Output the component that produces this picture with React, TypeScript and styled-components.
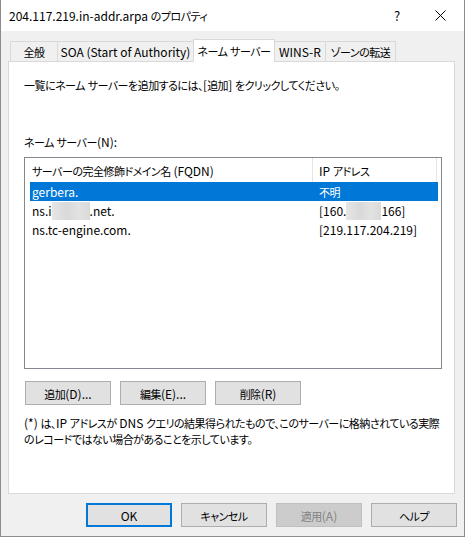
import { Fragment } from 'react';
import styled, { createGlobalStyle } from 'styled-components';

const GlobalStyle = createGlobalStyle`
  body {
    margin: 0;
    background: #ffffff;
    font-family: 'Noto Sans CJK JP', 'Noto Sans', sans-serif;
    font-feature-settings: 'palt';
    font-size: 12px;
    color: #000000;
  }
  * {
    box-sizing: border-box;
  }
`;

// Yu Gothic UI kana are much narrower than Noto's, so Japanese runs get a tighter span
const CJK = /([\u3000-\u30ff\u3400-\u9fff\uff01-\uff60]+)/;
const jp = (s: string) => (
  <span>
    {s.split(CJK).map((part, i) => (i % 2 ? <Ja key={i}>{part}</Ja> : <Fragment key={i}>{part}</Fragment>))}
  </span>
);

interface ServerRow {
  name: string[];
  ip: string[];
}

const rows: ServerRow[] = [
  { name: ['gerbera.'], ip: ['不明'] },
  { name: ['ns.i', '*', '.net.'], ip: ['[160.', '*', '166]'] },
  { name: ['ns.tc-engine.com.'], ip: ['[219.117.204.219]'] },
];

const tabs = [
  { label: '全般', w: 48 },
  { label: 'SOA (Start of Authority)', w: 137 },
  { label: 'ネーム サーバー', w: 82, active: true },
  { label: 'WINS-R', w: 52 },
  { label: 'ゾーンの転送', w: 71 },
];

const renderParts = (parts: string[], w: number) =>
  parts.map((p, i) => (p === '*' ? <Blur key={i} $w={w} /> : <Fragment key={i}>{jp(p)}</Fragment>));

const App = () => {
  return (
    <>
      <GlobalStyle />
      <Window>
        <TitleBar>
          <Title>{jp('204.117.219.in-addr.arpa のプロパティ')}</Title>
          <HelpGlyph>?</HelpGlyph>
          <CloseGlyph>
            <svg width="11" height="11" viewBox="0 0 11 11">
              <path d="M0.5 0.5 L10.5 10.5 M10.5 0.5 L0.5 10.5" stroke="#000" strokeWidth="1" />
            </svg>
          </CloseGlyph>
        </TitleBar>

        <Body>
          <TabStrip>
            {tabs.map(t => (
              <Tab key={t.label} $w={t.w} $active={!!t.active}>
                {jp(t.label)}
              </Tab>
            ))}
          </TabStrip>

          <Panel>
            <Intro>{jp('一覧にネーム サーバーを追加するには、[追加] をクリックしてください。')}</Intro>
            <Label>{jp('ネーム サーバー(N):')}</Label>

            <ListBox>
              <Header>
                <HeadCell $w={288}>{jp('サーバーの完全修飾ドメイン名 (FQDN)')}</HeadCell>
                <HeadCell $w={124} $pad={6}>{jp('IP アドレス')}</HeadCell>
              </Header>
              {rows.map((r, i) => (
                <Row key={i} $selected={i === 0}>
                  <Cell $w={283} $pad={2}>{renderParts(r.name, 38)}</Cell>
                  <Cell $w={124} $pad={6}>{renderParts(r.ip, 35)}</Cell>
                </Row>
              ))}
            </ListBox>

            <ButtonRow>
              <Button>{jp('追加(D)...')}</Button>
              <Button>{jp('編集(E)...')}</Button>
              <Button>{jp('削除(R)')}</Button>
            </ButtonRow>

            <Note>
              {jp('(*) は、IP アドレスが DNS クエリの結果得られたもので、このサーバーに格納されている実際')}
              <br />
              {jp('のレコードではない場合があることを示しています。')}
            </Note>
          </Panel>

          <Footer>
            <Button $default>OK</Button>
            <Button>{jp('キャンセル')}</Button>
            <Button $disabled>{jp('適用(A)')}</Button>
            <Button>{jp('ヘルプ')}</Button>
          </Footer>
        </Body>
      </Window>
    </>
  );
};

export default App;

const Ja = styled.span`
  font-size: 11px;
  letter-spacing: -0.5px;
`;

const Window = styled.div`
  width: 465px;
  height: 537px;
  display: flex;
  flex-direction: column;
  border: 1px solid #8c8c8c;
  border-top: none;
  background: #f0f0f0;
`;

const TitleBar = styled.div`
  height: 31px;
  flex-shrink: 0;
  display: flex;
  align-items: center;
  background: #ffffff;
  padding-left: 8px;
`;

const Title = styled.div`
  flex: 1;
  white-space: nowrap;
  margin-top: -1px;
`;

const HelpGlyph = styled.div`
  width: 14px;
  font-size: 13px;
  text-align: center;
  margin-right: 31px;
  margin-top: -1px;
`;

const CloseGlyph = styled.div`
  display: flex;
  margin-right: 18px;
`;

const Body = styled.div`
  flex: 1;
  display: flex;
  flex-direction: column;
  padding: 8px 9px 0 7px;
`;

const TabStrip = styled.div`
  display: flex;
  align-items: flex-end;
  height: 22px;
  padding-left: 2px;
`;

const Tab = styled.div<{ $w: number; $active: boolean }>`
  width: ${p => p.$w}px;
  height: ${p => (p.$active ? 23 : 20)}px;
  margin-left: -1px;
  margin-bottom: ${p => (p.$active ? -1 : 0)}px;
  position: relative;
  z-index: ${p => (p.$active ? 2 : 1)};
  display: flex;
  align-items: center;
  justify-content: center;
  padding-bottom: ${p => (p.$active ? 2 : 0)}px;
  white-space: nowrap;
  background: ${p => (p.$active ? '#ffffff' : '#f0f0f0')};
  border: 1px solid #d9d9d9;
  border-bottom: none;
  &:first-child {
    margin-left: 0;
  }
`;

const Panel = styled.div`
  height: 433px;
  display: flex;
  flex-direction: column;
  background: #ffffff;
  border: 1px solid #d9d9d9;
  padding: 0 0 0 15px;
`;

const Intro = styled.div`
  margin-top: 15px;
  line-height: 16px;
  white-space: nowrap;
`;

const Label = styled.div`
  margin-top: 41px;
  line-height: 16px;
`;

const ListBox = styled.div`
  width: 418px;
  height: 212px;
  margin-top: 7px;
  border: 1px solid #828790;
  background: #ffffff;
`;

const Header = styled.div`
  display: flex;
  height: 24px;
`;

const HeadCell = styled.div<{ $w: number; $pad?: number }>`
  width: ${p => p.$w}px;
  display: flex;
  align-items: center;
  padding-left: ${p => p.$pad ?? 7}px;
  border-right: 1px solid #e5e5e5;
  white-space: nowrap;
`;

const Row = styled.div<{ $selected: boolean }>`
  display: flex;
  width: 408px;
  height: 19px;
  margin-left: 5px;
  background: ${p => (p.$selected ? '#0078d7' : 'transparent')};
  color: ${p => (p.$selected ? '#ffffff' : '#000000')};
`;

const Cell = styled.div<{ $w: number; $pad: number }>`
  width: ${p => p.$w}px;
  display: flex;
  align-items: center;
  padding-left: ${p => p.$pad}px;
  white-space: nowrap;
`;

const Blur = styled.span<{ $w: number }>`
  display: inline-block;
  width: ${p => p.$w}px;
  height: 18px;
  background: linear-gradient(90deg, #e6e6e6 0%, #d9d9d9 40%, #e2e2e2 70%, #dadada 100%);
`;

const ButtonRow = styled.div`
  display: flex;
  gap: 9px;
  margin-top: 12px;
  margin-left: 1px;
`;

const Button = styled.button<{ $default?: boolean; $disabled?: boolean }>`
  width: 86px;
  height: 24px;
  padding: 0;
  font-family: inherit;
  font-feature-settings: 'palt';
  font-size: 12px;
  background: ${p => (p.$disabled ? '#cccccc' : '#e1e1e1')};
  color: ${p => (p.$disabled ? '#838383' : '#000000')};
  border: ${p => (p.$default ? '2px solid #0078d7' : p.$disabled ? '1px solid #bfbfbf' : '1px solid #adadad')};
`;

const Note = styled.div`
  margin-top: 10px;
  line-height: 15px;
  white-space: nowrap;
`;

const Footer = styled.div`
  display: flex;
  justify-content: flex-end;
  gap: 9px;
  margin-top: 9px;
  margin-right: -2px;
`;
